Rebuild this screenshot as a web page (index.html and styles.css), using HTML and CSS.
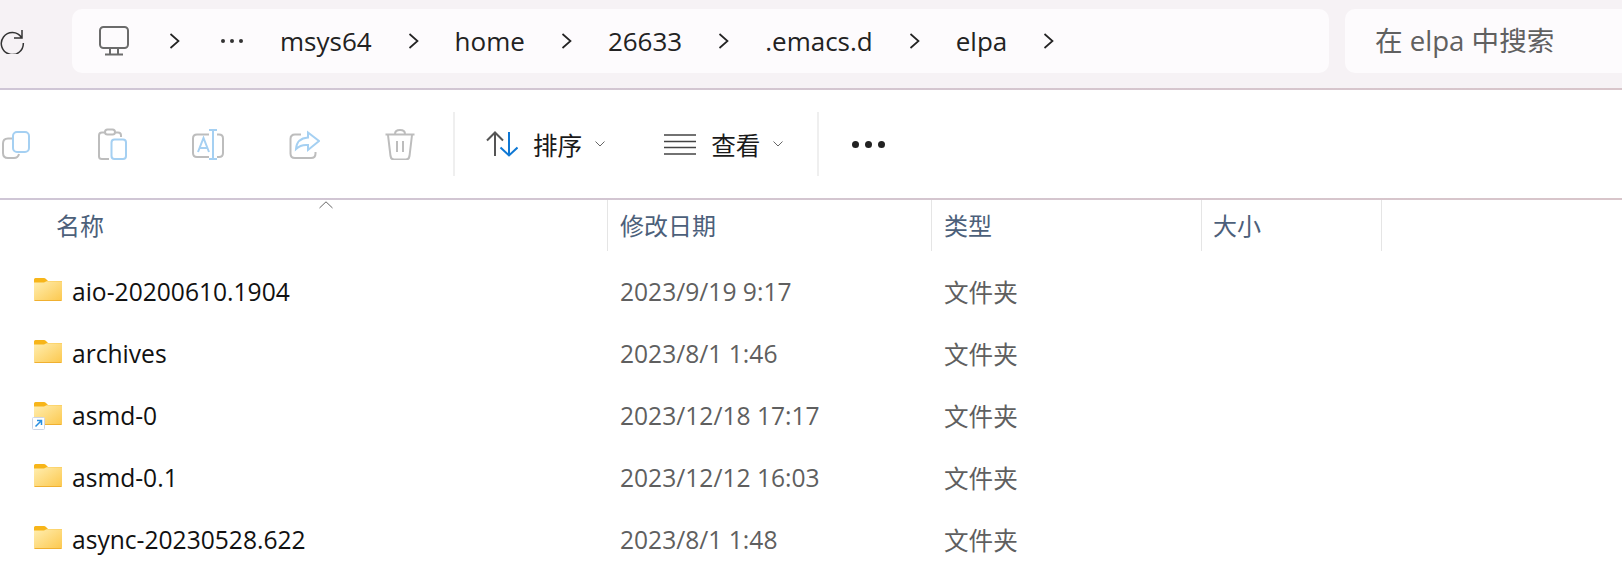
FILE: index.html
```html
<!DOCTYPE html>
<html>
<head lang="zh">
    <meta charset="UTF-8">
    <title>elpa</title>
    <link rel="stylesheet" href="styles.css">
</head>
<body>
<div class="nav">
    <svg class="refresh" width="26" height="26" viewBox="0 0 26 26"><path d="M22 2V10H14M21.500 9.500A11 11 0 1 0 23.300 15" fill="none" stroke="#333" stroke-width="1.500"/></svg>
    <div class="crumbs">
        <svg class="pc" width="30" height="30" viewBox="0 0 30 30"><rect x="1" y="1" width="28" height="21" rx="3.5" fill="none" stroke="#6b6b6b" stroke-width="2"/><path d="M11 22v6M19 22v6M6 28.5h18" fill="none" stroke="#6b6b6b" stroke-width="2"/></svg>
        <svg class="chev" width="11" height="16" viewBox="0 0 11 16"><path d="M1.5 1l8 7-8 7" fill="none" stroke="#222" stroke-width="1.7"/></svg>
        <span class="more">
            <i></i><i></i><i></i>
        </span>
        <span class="first">msys64</span>
        <svg class="chev" width="11" height="16" viewBox="0 0 11 16"><path d="M1.5 1l8 7-8 7" fill="none" stroke="#222" stroke-width="1.7"/></svg>
        <span>home</span>
        <svg class="chev" width="11" height="16" viewBox="0 0 11 16"><path d="M1.5 1l8 7-8 7" fill="none" stroke="#222" stroke-width="1.7"/></svg>
        <span>26633</span>
        <svg class="chev" width="11" height="16" viewBox="0 0 11 16"><path d="M1.5 1l8 7-8 7" fill="none" stroke="#222" stroke-width="1.7"/></svg>
        <span>.emacs.d</span>
        <svg class="chev" width="11" height="16" viewBox="0 0 11 16"><path d="M1.5 1l8 7-8 7" fill="none" stroke="#222" stroke-width="1.7"/></svg>
        <span>elpa</span>
        <svg class="chev" width="11" height="16" viewBox="0 0 11 16"><path d="M1.5 1l8 7-8 7" fill="none" stroke="#222" stroke-width="1.7"/></svg>
    </div>
    <div class="search">在 elpa 中搜索</div>
</div>
<div class="line"></div>
<div class="toolbar">
    <div class="tools">
        <svg width="32" height="32" viewBox="0 0 32 32" fill="none" stroke-width="2"><path d="M12 10.5H8Q3 10.5 3 15.5V25Q3 30 8 30H14Q18 30 19 26" stroke="#bdbdbd"/><rect x="13" y="4" width="16" height="20" rx="4" stroke="#a5d0f2"/></svg>
        <svg width="32" height="32" viewBox="0 0 32 32" fill="none" stroke-width="2"><path d="M9 4.5H6Q3 4.5 3 7.5V28.5Q3 31 6 31H13M19 4.5H22Q25 4.5 25 7.5V9" stroke="#bdbdbd"/><rect x="9" y="1.5" width="10" height="5" rx="2.5" stroke="#bdbdbd"/><rect x="15.5" y="11.5" width="14.5" height="19.5" rx="3" stroke="#a5d0f2"/></svg>
        <svg width="32" height="32" viewBox="0 0 32 32" fill="none" stroke-width="2"><path d="M17 6.5H5Q1 6.5 1 10.5V25Q1 29 5 29H17M25 6.5H27Q31 6.5 31 10.5V25Q31 29 27 29H25" stroke="#bdbdbd"/><path d="M21 2V31M17 2H25M17 31H25M6 24L11.5 10L17 24M8 20H15" stroke="#a5d0f2"/></svg>
        <svg width="32" height="32" viewBox="0 0 32 32" fill="none" stroke-width="2"><path d="M13 6.5H7Q2.5 6.5 2.5 11V25.5Q2.5 30 7 30H23Q27.5 30 27.5 25.5V24" stroke="#bdbdbd"/><path d="M8 21C8.5 14 13 10 20 9.5V4.5L31 13L20 22V17C15 16.5 11 18 8 21Z" stroke="#a5d0f2"/></svg>
        <svg width="32" height="32" viewBox="0 0 32 32" fill="none" stroke-width="2" stroke="#bdbdbd"><path d="M1.5 6.5H30.5M11 6Q11 2 16 2Q21 2 21 6M4 7L6.5 28Q7 31.5 10 31.5H22Q25 31.5 25.5 28L28 7M13 13V24M19 13V24"/></svg>
    </div>
    <div class="sep"></div>
    <div class="btn sort-btn">
        <svg width="32" height="26" viewBox="0 0 32 26" fill="none" stroke-width="2"><path d="M9 25V1.5M1 9.5L9 1.5L17 9.5" stroke="#555"/><path d="M23 1V24.5M14.5 16.5L23 24.5L31.5 16.5" stroke="#0f78d4"/></svg>
        <span>排序</span>
        <svg class="small-chev" width="10" height="6" viewBox="0 0 10 6"><path d="M.5.5L5 5L9.5.5" fill="none" stroke="#666"/></svg>
    </div>
    <div class="btn view-btn">
        <svg width="32" height="21" viewBox="0 0 32 21" stroke="#444" stroke-width="1.6"><path d="M0 1H32M0 7.5H32M0 13.5H32M0 20H32"/></svg>
        <span>查看</span>
        <svg class="small-chev" width="10" height="6" viewBox="0 0 10 6"><path d="M.5.5L5 5L9.5.5" fill="none" stroke="#666"/></svg>
    </div>
    <div class="sep sep2"></div>
    <div class="dots"><i></i><i></i><i></i></div>
</div>
<div class="line"></div>

<svg class="defs" width="0" height="0">
    <defs>
        <linearGradient id="fold" x1="0" y1="0" x2="1" y2="1">
            <stop offset="0" stop-color="#ffeeb0"/>
            <stop offset="1" stop-color="#fcc84e"/>
        </linearGradient>
        <symbol id="folder" viewBox="0 0 28 23">
            <path d="M1.5 0H10Q11 0 12 1L14 3H27Q28 3 28 4V8H0V1.5Q0 0 1.5 0Z" fill="#f7b519"/>
            <path d="M0 4.5H10L12.5 3.2H27Q28 3.2 28 4.2V21.5Q28 23 26.5 23H1.5Q0 23 0 21.5Z" fill="url(#fold)"/>
            <path d="M.5 22.5H27.5" stroke="#f0b030"/>
        </symbol>
    </defs>
</svg>

<div class="head">
    <div class="col col-name">名称
        <svg class="sort-up" width="14" height="8" viewBox="0 0 14 8"><path d="M.5 7L7 .8L13.500 7" fill="none" stroke="#666"/></svg>
    </div>
    <div class="col col-date">修改日期</div>
    <div class="col col-type">类型</div>
    <div class="col col-size">大小</div>
</div>

<div class="row">
    <div class="name"><svg class="ficon" width="28" height="23"><use href="#folder"/></svg>aio-20200610.1904</div>
    <div class="date">2023/9/19 9:17</div>
    <div class="type">文件夹</div>
</div>
<div class="row">
    <div class="name"><svg class="ficon" width="28" height="23"><use href="#folder"/></svg>archives</div>
    <div class="date">2023/8/1 1:46</div>
    <div class="type">文件夹</div>
</div>
<div class="row">
    <div class="name">
        <span class="link-wrap">
            <svg class="ficon" width="28" height="23"><use href="#folder"/></svg>
            <svg class="shortcut" width="13" height="13" viewBox="0 0 13 13"><rect x=".5" y=".5" width="12" height="12" rx="1" fill="#fff" stroke="#ccd5e6"/><path d="M3.500 9.500L9 4M5 3.500H9.500V8" fill="none" stroke="#2a8fe0" stroke-width="1.500"/></svg>
        </span>asmd-0</div>
    <div class="date">2023/12/18 17:17</div>
    <div class="type">文件夹</div>
</div>
<div class="row">
    <div class="name"><svg class="ficon" width="28" height="23"><use href="#folder"/></svg>asmd-0.1</div>
    <div class="date">2023/12/12 16:03</div>
    <div class="type">文件夹</div>
</div>
<div class="row">
    <div class="name"><svg class="ficon" width="28" height="23"><use href="#folder"/></svg>async-20230528.622</div>
    <div class="date">2023/8/1 1:48</div>
    <div class="type">文件夹</div>
</div>
</body>
</html>
```

FILE: styles.css
```css
* {
    margin: 0;
    padding: 0;
    box-sizing: border-box;
}

html, body {
    height: 568px;
    overflow: hidden;
}

body {
    background: #fff;
    font-family: "Open Sans", "Noto Sans CJK SC", sans-serif;
    color: #1a1a1a;
}

svg {
    display: block;
    flex: none;
}

.nav {
    height: 88px;
    display: flex;
    align-items: flex-start;
    padding-top: 9px;
    background: #f6f2f5;
}

.refresh {
    margin: 19px 46px 0 0;
}

.crumbs {
    width: 1257px;
    height: 64px;
    margin-right: 16px;
    padding-left: 27px;
    display: flex;
    align-items: center;
    gap: 36px;
    background: #fdfbfd;
    border-radius: 10px;
    font-size: 26px;
    color: #222;
}

.pc {
    margin-right: 4px;
}

.more {
    display: flex;
    gap: 5px;
    margin-left: 5px;
}

.more i {
    width: 4px;
    height: 4px;
    border-radius: 50%;
    background: #333;
}

.first {
    margin-left: 1px;
}

.search {
    flex: 1;
    height: 64px;
    padding-left: 30px;
    line-height: 62px;
    background: #fdfbfd;
    border-radius: 10px 0 0 10px;
    font-size: 27.6px;
    color: #606060;
}

.line {
    height: 2px;
    background: linear-gradient(to right, #cfc6d6, #d8c5ca);
}

.toolbar {
    height: 108px;
    display: flex;
    align-items: center;
    font-size: 24.6px;
}

.tools {
    display: flex;
    gap: 64px;
}

.sep {
    width: 2px;
    height: 64px;
    margin: 0 0 0 37px;
    background: #efefef;
}

.btn {
    display: flex;
    align-items: center;
}

.sort-btn {
    margin-left: 31px;
}

.sort-btn span {
    margin-left: 15px;
}

.view-btn {
    margin-left: 59px;
}

.view-btn span {
    margin-left: 15px;
}

.small-chev {
    margin-left: 13px;
}

.sep2 {
    margin-left: 34px;
}

.dots {
    display: flex;
    gap: 6px;
    margin-left: 33px;
}

.dots i {
    width: 7px;
    height: 7px;
    border-radius: 50%;
    background: #222;
}

.defs {
    position: absolute;
}

.head {
    height: 51px;
    display: flex;
    margin-bottom: 9px;
    font-size: 24px;
    color: #4c607a;
}

.col {
    height: 51px;
    line-height: 51px;
    border-right: 1px solid #e5e5e5;
}

.col-name {
    position: relative;
    width: 608px;
    padding-left: 56px;
}

.col-date {
    width: 324px;
    padding-left: 12px;
}

.col-type {
    width: 270px;
    padding-left: 12px;
}

.col-size {
    width: 180px;
    padding-left: 11px;
}

.sort-up {
    position: absolute;
    left: 319px;
    top: 1px;
}

.row {
    height: 62px;
    display: grid;
    grid-template-columns: 620px 324px 1fr;
    align-items: center;
    font-size: 24.6px;
}

.name {
    display: flex;
    align-items: center;
    gap: 10px;
    padding-left: 34px;
    color: #111;
}

.ficon {
    margin-bottom: 4px;
}

.date, .type {
    color: #5f5f5f;
}

.link-wrap {
    position: relative;
}

.shortcut {
    position: absolute;
    left: -2px;
    top: 15px;
}
```
